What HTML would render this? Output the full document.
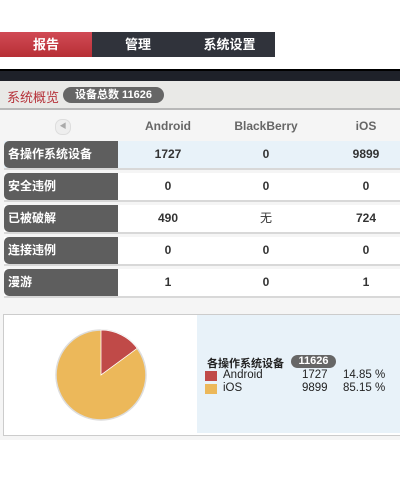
<!DOCTYPE html>
<html><head><meta charset="utf-8"><style>
body{margin:0;width:400px;height:480px;background:#fff;font-family:"Liberation Sans","Noto Sans CJK SC",sans-serif;position:relative;overflow:hidden}
.a{position:absolute}
.tab{position:absolute;top:32px;height:25px;line-height:25px;color:#fff;font-weight:bold;font-size:13px;text-align:center}
.row{position:absolute;left:4px;width:396px;height:27px;background:#fff;border-bottom:2px solid #d8d8d8}
.lab{position:absolute;left:0;top:0;width:114px;height:27px;background:#5e5e5e;border-radius:5px 0 0 5px;color:#fff;font-weight:bold;font-size:12px;line-height:27px;padding-left:4px;box-sizing:border-box}
.c{position:absolute;top:0;line-height:27px;font-weight:bold;font-size:12px;color:#333;width:80px;text-align:center}
.h{position:absolute;top:119px;font-weight:bold;font-size:12px;color:#666;width:90px;text-align:center}
</style></head><body>
<div class="tab" style="left:0;width:92px;background:linear-gradient(#d14a55,#b72f35)">报告</div>
<div class="tab" style="left:92px;width:183px;background:#30333b"></div>
<div class="tab" style="left:92px;width:92px">管理</div>
<div class="tab" style="left:184px;width:91px">系统设置</div>
<div class="a" style="left:0;top:69px;width:400px;height:11px;background:#1e2129;border-top:2px solid #000"></div>
<div class="a" style="left:0;top:81px;width:400px;height:27px;background:#e9e9e7;border-bottom:2px solid #b8b8b8"></div>
<div class="a" style="left:7px;top:87px;color:#b6323a;font-size:13px">系统概览</div>
<div class="a" style="left:63px;top:87px;width:101px;height:16px;border-radius:8px;background:#666;color:#fff;font-weight:bold;font-size:11px;line-height:16px;text-align:center">设备总数 11626</div>
<div class="a" style="left:0;top:110px;width:400px;height:330px;background:#f5f5f5"></div>
<div class="a" style="left:55px;top:119px;width:14px;height:14px;border-radius:7px;background:#eee;border:1px solid #ddd;color:#aaa;font-size:7px;line-height:14px;text-align:center">◀</div>
<div class="h" style="left:123px">Android</div>
<div class="h" style="left:221px">BlackBerry</div>
<div class="h" style="left:321px">iOS</div>
<div class="row" style="top:141px;background:#e8f2f9"><div class="lab">各操作系统设备</div><div class="c" style="left:124px">1727</div><div class="c" style="left:222px">0</div><div class="c" style="left:322px">9899</div></div>
<div class="row" style="top:173px"><div class="lab">安全违例</div><div class="c" style="left:124px">0</div><div class="c" style="left:222px">0</div><div class="c" style="left:322px">0</div></div>
<div class="row" style="top:205px"><div class="lab">已被破解</div><div class="c" style="left:124px">490</div><div class="c" style="left:222px;font-weight:normal">无</div><div class="c" style="left:322px">724</div></div>
<div class="row" style="top:237px"><div class="lab">连接违例</div><div class="c" style="left:124px">0</div><div class="c" style="left:222px">0</div><div class="c" style="left:322px">0</div></div>
<div class="row" style="top:269px"><div class="lab">漫游</div><div class="c" style="left:124px">1</div><div class="c" style="left:222px">0</div><div class="c" style="left:322px">1</div></div>
<div class="a" style="left:3px;top:314px;width:397px;height:120px;border:1px solid #ccc;border-right:none;background:#fff"></div>
<div class="a" style="left:197px;top:315px;width:203px;height:118px;background:#e8f2f9"></div>
<svg class="a" style="left:50px;top:325px" width="100" height="100" viewBox="0 0 100 100">
<circle cx="51" cy="50" r="45" fill="#ecb85a" stroke="#ddd" stroke-width="1.5"/>
<path d="M51 50 L51 5 A45 45 0 0 1 87.2 23.3 Z" fill="#c04a48" stroke="#fff" stroke-width="0.8"/>
</svg>
<div class="a" style="left:207px;top:355px;font-size:11px;font-weight:bold;color:#222">各操作系统设备</div>
<div class="a" style="left:291px;top:355px;width:45px;height:13px;border-radius:7px;background:#666;color:#fff;font-weight:bold;font-size:11px;line-height:13px;text-align:center">11626</div>
<div class="a" style="left:205px;top:371px;width:12px;height:10px;background:#c04a48"></div>
<div class="a" style="left:205px;top:384px;width:12px;height:10px;background:#ecb85a"></div>
<div class="a" style="left:223px;top:369px;font-size:11.5px;color:#222;line-height:13px">Android<br>iOS</div>
<div class="a" style="left:302px;top:369px;font-size:11.5px;color:#222;line-height:13px">1727<br>9899</div>
<div class="a" style="left:343px;top:369px;font-size:11.5px;color:#222;line-height:13px">14.85 %<br>85.15 %</div>
</body></html>
